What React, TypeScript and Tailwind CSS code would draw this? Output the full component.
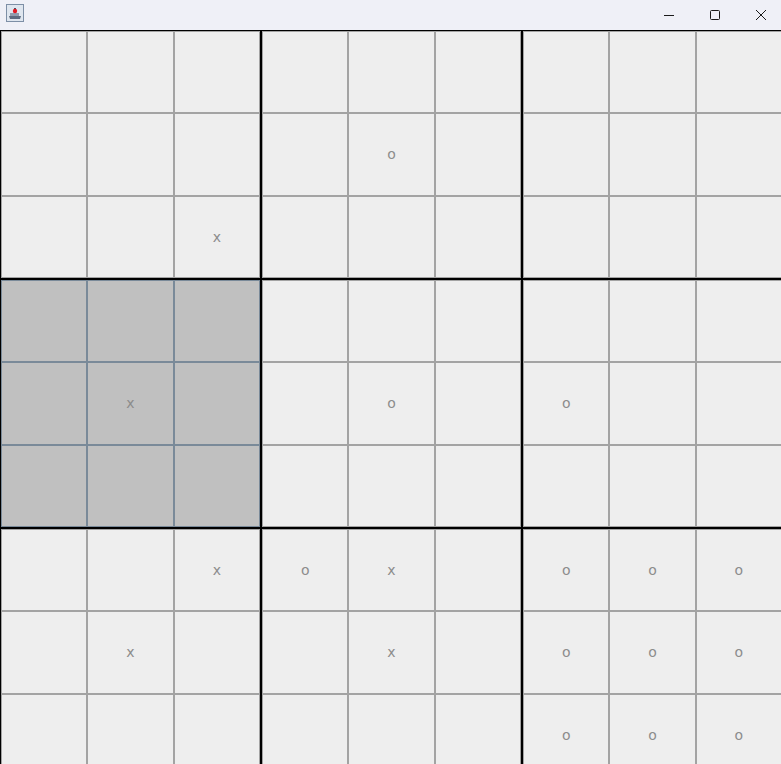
import React from "react";

type Mark = "" | "x" | "o";

const boards: Mark[][] = [
  ["", "", "", "", "", "", "", "", "x"],
  ["", "", "", "", "o", "", "", "", ""],
  ["", "", "", "", "", "", "", "", ""],
  ["", "", "", "", "x", "", "", "", ""],
  ["", "", "", "", "o", "", "", "", ""],
  ["", "", "", "o", "", "", "", "", ""],
  ["", "", "x", "", "x", "", "", "", ""],
  ["o", "x", "", "", "x", "", "", "", ""],
  ["o", "o", "o", "o", "o", "o", "o", "o", "o"],
];

function JavaIcon() {
  return (
    <svg width="18" height="18" viewBox="0 0 18 18">
      <rect x="0.5" y="0.5" width="17" height="17" fill="#dfe6ef" stroke="#7d8fa6" />
      <path d="M3 12 L15 12 L14 15 L4 15 Z" fill="#5c6b80" />
      <path d="M4 9 L13 9 L13 12 L4 12 Z" fill="#8f9cae" />
      <path d="M8 4 L10 4 L10 9 L8 9 Z" fill="#44546a" />
      <circle cx="9" cy="7" r="2.2" fill="#e01b24" />
    </svg>
  );
}

function Cell({ mark, hl }: { mark: Mark; hl: boolean }) {
  return (
    <div
      className={
        hl
          ? "flex items-center justify-center border border-[#7a8a99] bg-[#c0c0c0]"
          : "flex items-center justify-center border border-[#a3a3a3] bg-[#eeeeee]"
      }
    >
      <span className="text-[14px] leading-none text-[#8c8c8c] [font-family:'DejaVu_Sans','Liberation_Sans',sans-serif]">
        {mark}
      </span>
    </div>
  );
}

export default function App() {
  return (
    <div className="w-[781px] h-[764px] overflow-hidden bg-[#eeeeee] flex flex-col">
      <div className="h-[30px] shrink-0 bg-[#eff0f7] flex items-center">
        <div className="ml-[6px] mt-[-4px]">
          <JavaIcon />
        </div>
        <div className="ml-auto mr-[-3px] flex items-center h-full">
          <div className="w-[46px] h-full flex items-center justify-center">
            <svg width="12" height="12" viewBox="0 0 12 12">
              <line x1="1" y1="6.5" x2="11" y2="6.5" stroke="#1a1a1a" strokeWidth="1" />
            </svg>
          </div>
          <div className="w-[46px] h-full flex items-center justify-center">
            <svg width="12" height="12" viewBox="0 0 12 12">
              <rect x="1.5" y="1.5" width="9" height="9" rx="1" fill="none" stroke="#1a1a1a" strokeWidth="1" />
            </svg>
          </div>
          <div className="w-[46px] h-full flex items-center justify-center">
            <svg width="12" height="12" viewBox="0 0 12 12">
              <path d="M1 1 L11 11 M11 1 L1 11" stroke="#1a1a1a" strokeWidth="1" />
            </svg>
          </div>
        </div>
      </div>
      <div className="grid grid-cols-[261px_261px_261px] grid-rows-[249px_249px_249px] w-[783px]">
        {boards.map((b, bi) => (
          <div key={bi} className="border border-black grid grid-cols-3 grid-rows-3">
            {b.map((m, ci) => (
              <Cell key={ci} mark={m} hl={bi === 3} />
            ))}
          </div>
        ))}
      </div>
    </div>
  );
}
